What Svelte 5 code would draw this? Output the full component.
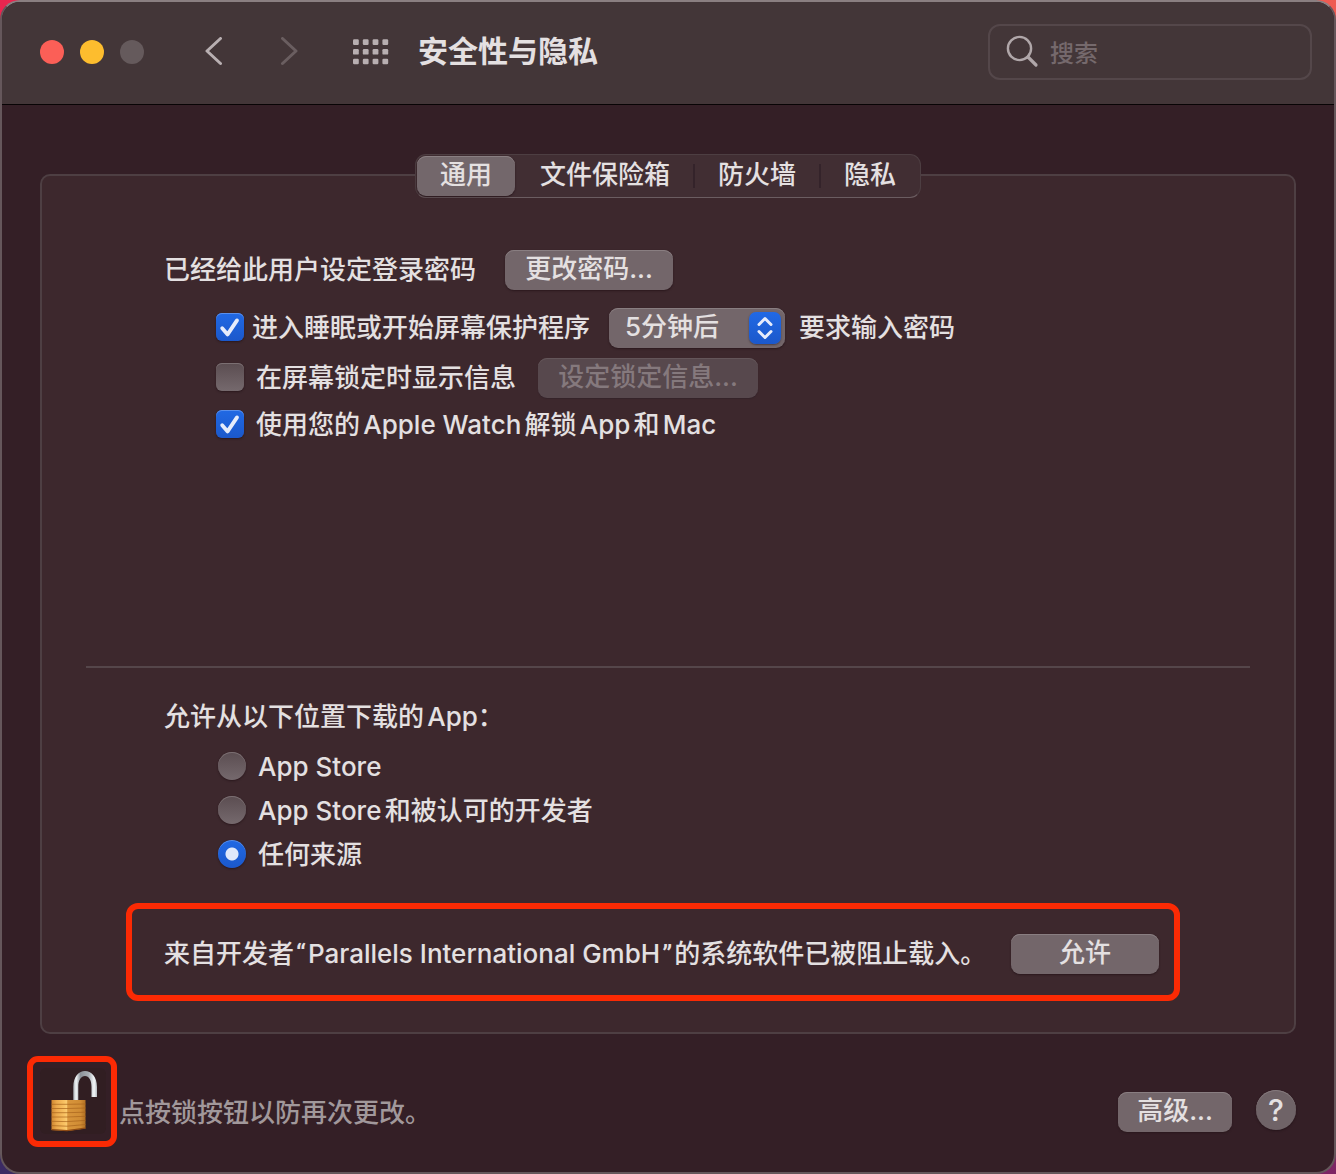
<script>
  const tabs = ['通用', '文件保险箱', '防火墙', '隐私'];
  const sources = ['App Store', 'App Store和被认可的开发者', '任何来源'];
  const dots = [0, 1, 2].flatMap((row) => [0, 1, 2, 3].map((col) => ({ row, col })));

  let tab = $state('通用');
  let source = $state('任何来源');
  let requirePassword = $state(true);
  let showMessage = $state(false);
  let useWatch = $state(true);
  let delay = $state('5分钟后');
</script>

{#snippet tick()}
  <svg class="tick" viewBox="0 0 28 28" aria-hidden="true">
    <path d="M6.2 15.2 11.6 21.4 21 7.4" />
  </svg>
{/snippet}

<div class="window">
  <header>
    <div class="lights">
      <button class="light close" aria-label="关闭"></button>
      <button class="light minimize" aria-label="最小化"></button>
      <button class="light zoom" aria-label="缩放" disabled></button>
    </div>
    <nav>
      <button class="plain" aria-label="后退">
        <svg width="18" height="30" viewBox="0 0 18 30"><path d="M15.5 1.5 2 14 15.5 26.5" /></svg>
      </button>
      <button class="plain faded" aria-label="前进" disabled>
        <svg width="18" height="30" viewBox="0 0 18 30"><path d="M2.5 1.5 16 14 2.5 26.5" /></svg>
      </button>
    </nav>
    <button class="plain" aria-label="显示全部">
      <svg class="dots" width="36" height="26" viewBox="0 0 36 26">
        {#each dots as d}
          <rect x={d.col * 9.8} y={d.row * 9.7 + 0.3} width="5.8" height="5.6" rx="1.2" />
        {/each}
      </svg>
    </button>
    <h1>安全性与隐私</h1>
    <label class="search">
      <svg width="34" height="34" viewBox="0 0 34 34" aria-hidden="true">
        <circle cx="13.5" cy="13.5" r="11.6" />
        <path class="handle" d="M22 22 30 30" />
      </svg>
      <input type="search" placeholder="搜索" aria-label="搜索" />
    </label>
  </header>

  <main>
    <div class="tabs" role="tablist">
      {#each tabs as name}
        <button role="tab" aria-selected={tab === name} onclick={() => (tab = name)}>{name}</button>
      {/each}
    </div>

    <div class="panel">
      <section class="login">
        <div class="row">
          <span>已经给此用户设定登录密码</span>
          <button class="push change">更改密码...</button>
        </div>
        <div class="row indent sleep">
          <label class="option tight">
            <span class="box"><input type="checkbox" bind:checked={requirePassword} />{#if requirePassword}{@render tick()}{/if}</span>
            进入睡眠或开始屏幕保护程序
          </label>
          <span class="popup">
            <select bind:value={delay} aria-label="要求输入密码的时间">
              <option>立即</option>
              <option>5分钟后</option>
              <option>1小时后</option>
            </select>
            <svg width="32" height="32" viewBox="0 0 32 32" aria-hidden="true">
              <path d="M10 12.5 16 6.5 22 12.5M10 19.5 16 25.5 22 19.5" />
            </svg>
          </span>
          <span class="after">要求输入密码</span>
        </div>
        <div class="row indent message">
          <label class="option">
            <span class="box"><input type="checkbox" bind:checked={showMessage} />{#if showMessage}{@render tick()}{/if}</span>
            在屏幕锁定时显示信息
          </label>
          <button class="push set" disabled={!showMessage}>设定锁定信息...</button>
        </div>
        <div class="row indent watch">
          <label class="option">
            <span class="box"><input type="checkbox" bind:checked={useWatch} />{#if useWatch}{@render tick()}{/if}</span>
            使用您的Apple Watch解锁App和Mac
          </label>
        </div>
      </section>

      <hr />

      <section class="download" role="radiogroup" aria-labelledby="download-title">
        <h2 id="download-title">允许从以下位置下载的App：</h2>
        {#each sources as name}
          <label class="choice">
            <input type="radio" name="source" value={name} bind:group={source} />
            <span>{name}</span>
          </label>
        {/each}
      </section>

      <section class="blocked">
        <p>来自开发者<span class="quote">“</span>Parallels International GmbH<span class="quote">”</span>的系统软件已被阻止载入。</p>
        <button class="push allow">允许</button>
      </section>
    </div>
  </main>

  <footer>
    <button class="lock" aria-label="锁定">
      <svg width="78" height="79" viewBox="0 0 78 79" aria-hidden="true">
        <defs>
          <linearGradient id="brass" x1="0" x2="1" y1="0" y2="0">
            <stop offset="0" stop-color="#cf8630" />
            <stop offset="0.15" stop-color="#eba94c" />
            <stop offset="0.38" stop-color="#f9c263" />
            <stop offset="0.44" stop-color="#fbcb70" />
            <stop offset="0.48" stop-color="#d9963c" />
            <stop offset="0.85" stop-color="#d08c34" />
            <stop offset="1" stop-color="#b06f22" />
          </linearGradient>
          <linearGradient id="steel" x1="0" x2="1" y1="0" y2="0">
            <stop offset="0" stop-color="#a9afb5" />
            <stop offset="0.12" stop-color="#f4f7f9" />
            <stop offset="0.3" stop-color="#8c9299" />
            <stop offset="0.65" stop-color="#a9afb5" />
            <stop offset="0.88" stop-color="#f4f7f9" />
            <stop offset="1" stop-color="#b5babf" />
          </linearGradient>
        </defs>
        <rect x="7" y="6" width="66" height="66" rx="6" fill="#311e22" />
        <path d="M40.3 39V25C40.3 14.5 46 9 52 9S64 14.5 64 25V35H58.5V25C58.5 18 56 14 52 14S45.3 18 45.3 25V39Z" fill="url(#steel)" />
        <path d="M18.5 38H52.5V66.5L34 69 18.5 68Z" fill="url(#brass)" />
        <path d="M18.5 42.3H34L52.5 42M18.5 46.5H34L52.5 46M18.5 50.7H34L52.5 50.2M18.5 55H34L52.5 54.3M18.5 59.3 34 59.6 52.5 58.4M18.5 63.6 34 64.2 52.5 62.5" fill="none" stroke="#a8641c" stroke-opacity="0.7" stroke-width="1" />
        <path d="M18.5 67.6 34 68.6 52.5 66.2" fill="none" stroke="#8d4a14" stroke-width="1.2" />
      </svg>
    </button>
    <div class="bar">
      <p>点按锁按钮以防再次更改。</p>
      <button class="push advanced">高级...</button>
      <button class="help" aria-label="帮助">?</button>
    </div>
  </footer>
</div>

<style>
  :global(body) {
    background: linear-gradient(100deg, #e8264f, #ef5f52) top / 100% 50% no-repeat,
      linear-gradient(90deg, #3b2a63, #7d2464) bottom / 100% 50% no-repeat;
  }
  .window, .window * {
    box-sizing: border-box;
  }
  .window {
    display: flex;
    flex-direction: column;
    min-height: 100vh;
    border: 2px solid #65575b;
    border-top-color: #8a7f81;
    border-radius: 20px;
    overflow: hidden;
    background: #341f26;
    color: #e4e0e1;
    font: 500 26px/36px Inter, "Noto Sans CJK SC", sans-serif;
    text-autospace: normal;
    white-space: nowrap;
  }
  button, input, select {
    margin: 0;
    padding: 0;
    border: 0;
    background: none;
    color: inherit;
    font: inherit;
    text-autospace: inherit;
  }
  h1, h2, p {
    margin: 0;
    font-weight: inherit;
    font-size: 26px;
  }

  header {
    display: flex;
    align-items: center;
    height: 103px;
    padding: 0 22px 2px 38px;
    background: #433638;
    border-bottom: 1px solid #080405;
  }
  .lights {
    display: flex;
    gap: 16px;
  }
  .light {
    width: 24px;
    height: 24px;
    border-radius: 50%;
  }
  .close { background: #fb5f57; }
  .minimize { background: #fdbd2e; }
  .zoom { background: #655a5c; }
  nav {
    display: flex;
    gap: 57px;
    margin: 0 55px 0 61px;
  }
  .plain {
    display: flex;
    color: #b8afb1;
  }
  .faded { color: #6a5e60; }
  .plain path {
    fill: none;
    stroke: currentColor;
    stroke-width: 3;
    stroke-linecap: round;
    stroke-linejoin: round;
  }
  .dots { fill: #b8afb1; }
  h1 {
    margin-left: 29px;
    padding-bottom: 2px;
    font-size: 30px;
    font-weight: 700;
  }
  .search {
    display: flex;
    align-items: center;
    gap: 10px;
    width: 324px;
    height: 56px;
    margin-left: auto;
    padding: 0 14px 0 16px;
    border: 2px solid #54474a;
    border-radius: 12px;
  }
  .search svg {
    flex: none;
    fill: none;
    stroke: #b0a7a9;
    stroke-width: 2.4;
    stroke-linecap: round;
  }
  .search .handle { stroke-width: 3.2; }
  .search input {
    flex: 1;
    min-width: 0;
    padding-top: 4px;
    outline: 0;
    font-size: 24px;
  }
  .search input::placeholder {
    color: #75696c;
    opacity: 1;
  }

  main {
    display: flex;
    flex: 1;
    flex-direction: column;
    padding: 49px 38px 0;
  }
  .tabs {
    display: flex;
    gap: 2px;
    align-self: center;
    height: 44px;
    padding: 1px;
    border: 1px solid #4d3e42;
    border-bottom-color: #6b5d61;
    border-radius: 11px;
    background: #412e33;
    z-index: 1;
  }
  .tabs button {
    position: relative;
    padding: 0 23px 2px;
    border-radius: 9px;
  }
  .tabs button[aria-selected="true"] {
    background: #73676b;
    box-shadow: inset 0 1px #8a7f82, 0 1px 2px #2a181d;
  }
  .tabs button + button:not([aria-selected="true"])::before {
    content: "";
    position: absolute;
    left: -2px;
    top: 8px;
    width: 2px;
    height: 24px;
    background: #34232a;
  }
  .tabs button[aria-selected="true"] + button::before {
    display: none;
  }
  .panel {
    display: flex;
    flex: 1;
    flex-direction: column;
    margin-top: -24px;
    border: 2px solid #4e3f43;
    border-radius: 10px;
    background: #3d282d;
  }
  .login {
    min-height: 490px;
    padding: 74px 44px 0 122px;
  }
  .row {
    display: flex;
    align-items: center;
    min-height: 40px;
  }
  .indent { padding-left: 52px; }
  .sleep { margin-top: 18px; }
  .message { margin-top: 10px; }
  .watch { margin-top: 7px; }
  .option {
    display: flex;
    align-items: center;
    gap: 12px;
  }
  .tight { gap: 8px; }
  .box {
    display: grid;
    flex: none;
    padding-bottom: 2px;
  }
  .box input, .tick {
    grid-area: 1 / 1;
    width: 28px;
    height: 28px;
  }
  .tick {
    pointer-events: none;
    fill: none;
    stroke: #e6ecfb;
    stroke-width: 3.8;
    stroke-linecap: round;
    stroke-linejoin: round;
  }
  input[type="checkbox"], input[type="radio"] {
    appearance: none;
    flex: none;
    width: 28px;
    height: 28px;
    border-radius: 6px;
    background: linear-gradient(#5b4d51, #75696d);
    box-shadow: inset 0 1px #7b6f72, 0 1px 2px #2a181d;
  }
  input[type="radio"] { border-radius: 50%; }
  input[type="checkbox"]:checked, input[type="radio"]:checked {
    background: linear-gradient(#2169e4, #1b58cb);
    box-shadow: inset 0 1px #5a90ec, 0 1px 2px #2a181d;
  }
  input[type="radio"]:checked {
    background: radial-gradient(circle, #e0e9fb 6px, transparent 7px), linear-gradient(#2169e4, #1b58cb);
  }
  .push {
    flex: none;
    height: 40px;
    padding: 0 18px 2px;
    border-radius: 9px;
    background: #73666a;
    box-shadow: inset 0 1px #897e81, 0 1px 2px #2a181d;
    text-align: center;
  }
  .push:disabled {
    background: #57484d;
    box-shadow: inset 0 1px #64565a, 0 1px 1px #35232a;
    color: #85797d;
  }
  .change { min-width: 168px; margin-left: 29px; }
  .set { min-width: 220px; margin-left: 22px; }
  .allow { min-width: 148px; }
  .advanced { min-width: 114px; }
  .popup {
    display: grid;
    align-items: center;
    margin-left: 19px;
  }
  .popup select {
    grid-area: 1 / 1;
    appearance: none;
    width: 176px;
    height: 40px;
    padding: 0 40px 2px 16px;
    border-radius: 9px;
    background: #73666a;
    box-shadow: inset 0 1px #897e81, 0 1px 2px #2a181d;
  }
  .popup svg {
    grid-area: 1 / 1;
    justify-self: end;
    margin-right: 4px;
    border-radius: 7px;
    background: linear-gradient(#2169e4, #1b58cb);
    box-shadow: 0 1px 2px #4c3d42;
    pointer-events: none;
    fill: none;
    stroke: #e6ecfb;
    stroke-width: 3;
    stroke-linecap: round;
    stroke-linejoin: round;
  }
  .after { margin-left: 14px; }
  hr {
    align-self: stretch;
    height: 2px;
    margin: 0 44px;
    border: 0;
    background: #55464a;
  }
  .download { padding: 31px 44px 0 122px; }
  h2 { margin-bottom: 9px; }
  .choice {
    display: flex;
    align-items: center;
    gap: 12px;
    width: max-content;
    height: 44px;
    margin-left: 54px;
  }
  .choice span { padding-top: 2px; }
  .blocked {
    display: flex;
    align-items: center;
    justify-content: space-between;
    min-height: 98px;
    margin: 27px 114px 31px 84px;
    padding: 3px 15px 0 32px;
    border: 6px solid #fb2a04;
    border-radius: 12px;
  }
  .quote {
    padding: 0 2px;
    font-family: Roboto, sans-serif;
  }

  footer {
    display: flex;
    padding: 22px 38px 25px 25px;
  }
  .lock {
    display: flex;
    flex: none;
    border: 6px solid #fb2a04;
    border-radius: 11px;
  }
  .bar {
    display: flex;
    flex: 1;
    align-items: center;
    padding-top: 20px;
    padding-left: 2px;
  }
  .bar p {
    margin-right: auto;
    padding-top: 2px;
    color: #a1989b;
  }
  .help {
    width: 40px;
    height: 40px;
    margin: 0 0 4px 24px;
    border-radius: 50%;
    background: #6f6367;
    box-shadow: inset 0 1px #857a7d, 0 1px 2px #25141a;
    font-size: 30px;
  }
</style>
